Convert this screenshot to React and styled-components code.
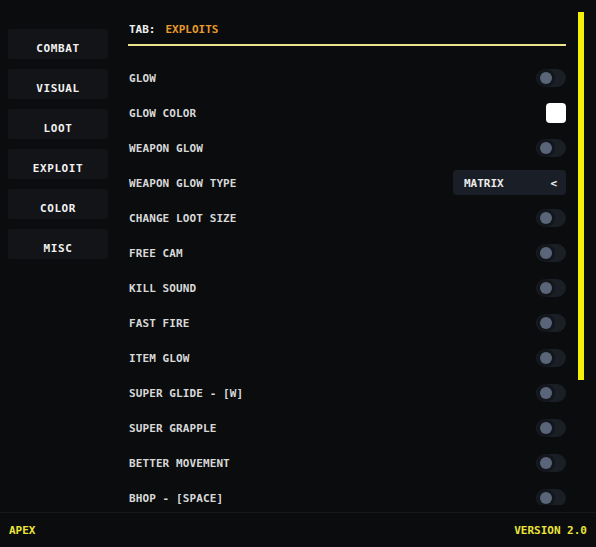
import React from "react";
import styled, { createGlobalStyle } from "styled-components";

const Global = createGlobalStyle`
  html, body { margin: 0; padding: 0; background: #0a0c0e; }
  body { font-family: "DejaVu Sans Mono", "Liberation Mono", monospace; }
  * { box-sizing: border-box; }
`;

const Shell = styled.div`
  width: 596px;
  height: 547px;
  display: flex;
  flex-direction: column;
  background: #0a0c0e;
  overflow: hidden;
`;

const Body = styled.div`
  flex: 1;
  display: flex;
  padding: 12px 12px 7px 8px;
  min-height: 0;
`;

const Sidebar = styled.nav`
  width: 100px;
  display: flex;
  flex-direction: column;
  gap: 10px;
  padding-top: 17px;
`;

const NavButton = styled.div`
  height: 30px;
  background: #121417;
  border-radius: 2px;
  display: flex;
  justify-content: center;
  align-items: center;
  padding-top: 8px;
  color: #f2f2f2;
  font-size: 11px;
  font-weight: bold;
  letter-spacing: 0.6px;
`;

const Content = styled.div`
  flex: 1;
  margin-left: 20px;
  overflow: hidden;
  min-width: 0;
`;

const Header = styled.div`
  height: 34px;
  display: flex;
  align-items: center;
  gap: 10px;
  padding: 2px 0 0 1px;
  border-bottom: 2px solid #ece38c;
  font-size: 11px;
  font-weight: bold;
`;

const HeaderLabel = styled.span`
  color: #f0f0f0;
`;

const HeaderValue = styled.span`
  color: #e89a2c;
`;

const List = styled.div`
  margin-top: 14px;
  display: flex;
  flex-direction: column;
`;

const Row = styled.div`
  height: 35px;
  display: flex;
  align-items: center;
  justify-content: space-between;
`;

const Label = styled.span`
  color: #d8d8d8;
  font-size: 11px;
  font-weight: bold;
  line-height: 13px;
  padding: 2px 0 0 1px;
  letter-spacing: 0.1px;
`;

const Toggle = styled.div`
  width: 30px;
  height: 18px;
  border-radius: 9px;
  background: #1a1e25;
  display: flex;
  align-items: center;
  padding-left: 4px;
`;

const Knob = styled.div`
  width: 12px;
  height: 12px;
  border-radius: 50%;
  background: #5b6579;
  box-shadow: 0 0 0 3px #13161b;
`;

const Swatch = styled.div`
  width: 20px;
  height: 20px;
  border-radius: 4px;
  background: ${(p) => p.$color};
`;

const Select = styled.div`
  width: 113px;
  height: 25px;
  border-radius: 4px;
  background: #1a1e26;
  display: flex;
  align-items: center;
  justify-content: space-between;
  padding: 1px 9px 0 11px;
  color: #ececec;
  font-size: 11px;
  font-weight: bold;
`;

const Track = styled.div`
  width: 6px;
  margin-left: 12px;
  display: flex;
  flex-direction: column;
`;

const Thumb = styled.div`
  width: 6px;
  height: 368px;
  background: #f5f00a;
`;

const Footer = styled.footer`
  height: 35px;
  border-top: 1px solid #15181c;
  display: flex;
  align-items: center;
  justify-content: space-between;
  padding: 1px 9px 0 9px;
  color: #ebe43a;
  font-size: 11px;
  font-weight: bold;
`;

const tabs = ["COMBAT", "VISUAL", "LOOT", "EXPLOIT", "COLOR", "MISC"];

const rows = [
  { label: "GLOW", type: "toggle" },
  { label: "GLOW COLOR", type: "color", color: "#ffffff" },
  { label: "WEAPON GLOW", type: "toggle" },
  { label: "WEAPON GLOW TYPE", type: "select", value: "MATRIX" },
  { label: "CHANGE LOOT SIZE", type: "toggle" },
  { label: "FREE CAM", type: "toggle" },
  { label: "KILL SOUND", type: "toggle" },
  { label: "FAST FIRE", type: "toggle" },
  { label: "ITEM GLOW", type: "toggle" },
  { label: "SUPER GLIDE - [W]", type: "toggle" },
  { label: "SUPER GRAPPLE", type: "toggle" },
  { label: "BETTER MOVEMENT", type: "toggle" },
  { label: "BHOP - [SPACE]", type: "toggle" },
];

function Control({ row }) {
  if (row.type === "color") return <Swatch $color={row.color} />;
  if (row.type === "select")
    return (
      <Select>
        <span>{row.value}</span>
        <span>&lt;</span>
      </Select>
    );
  return (
    <Toggle>
      <Knob />
    </Toggle>
  );
}

export default function App() {
  return (
    <Shell>
      <Global />
      <Body>
        <Sidebar>
          {tabs.map((t) => (
            <NavButton key={t}>{t}</NavButton>
          ))}
        </Sidebar>
        <Content>
          <Header>
            <HeaderLabel>TAB:</HeaderLabel>
            <HeaderValue>EXPLOITS</HeaderValue>
          </Header>
          <List>
            {rows.map((r) => (
              <Row key={r.label}>
                <Label>{r.label}</Label>
                <Control row={r} />
              </Row>
            ))}
          </List>
        </Content>
        <Track>
          <Thumb />
        </Track>
      </Body>
      <Footer>
        <span>APEX</span>
        <span>VERSION 2.0</span>
      </Footer>
    </Shell>
  );
}
